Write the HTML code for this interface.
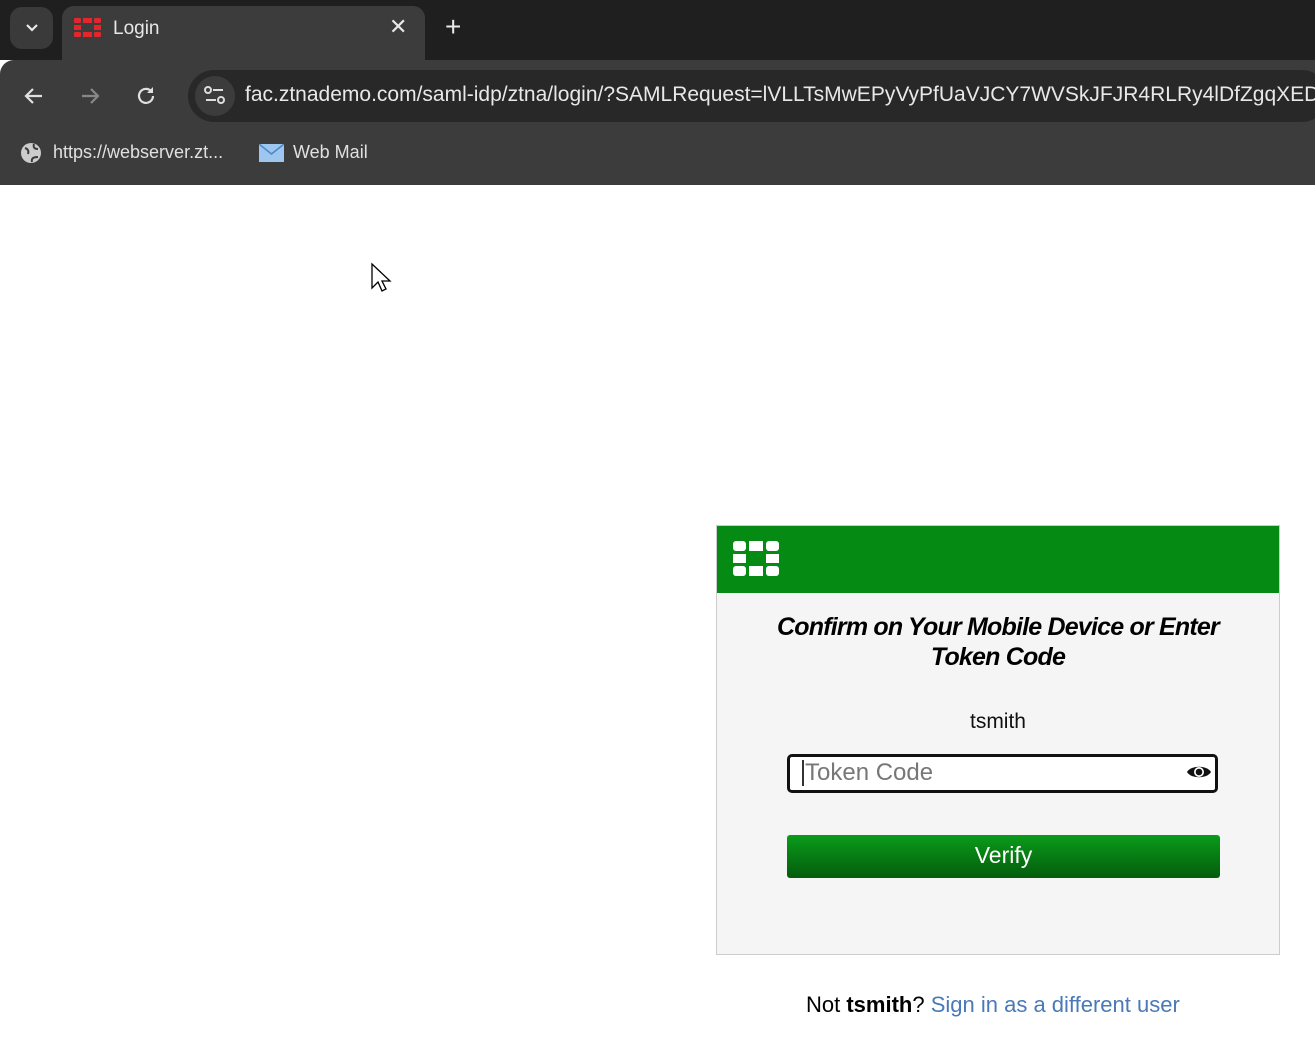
<!DOCTYPE html>
<html><head><style>
*{margin:0;padding:0;box-sizing:border-box}
body{width:1315px;height:1048px;background:#fff;font-family:"Liberation Sans",sans-serif;position:relative;overflow:hidden}
.abs{position:absolute}
</style></head><body>
<div class="abs" style="left:0;top:0;width:1315px;height:60px;background:#1f1f1f"></div>
<div class="abs" style="left:10px;top:7px;width:43px;height:42px;background:#3a3a3a;border-radius:12px;color:#ddd;text-align:center;line-height:42px;font-size:14px">
<svg width="14" height="10" viewBox="0 0 14 10" style="margin-top:16px"><path d="M2 2l5 5 5-5" stroke="#e8e8e8" stroke-width="2.2" fill="none"/></svg></div>
<div class="abs" style="left:62px;top:6px;width:363px;height:56px;background:#3c3c3c;border-radius:12px 12px 0 0"></div>
<svg class="abs" style="left:74px;top:18px" width="28" height="20" viewBox="0 0 28 20"><g fill="#e8242b"><rect x="0" y="0" width="7" height="5" rx="1.5"/><rect x="9" y="0" width="9" height="5"/><rect x="20" y="0" width="7" height="5" rx="1.5"/><rect x="0" y="7" width="7" height="5"/><rect x="20" y="7" width="7" height="5"/><rect x="0" y="14" width="7" height="5" rx="1.5"/><rect x="9" y="14" width="9" height="5"/><rect x="20" y="14" width="7" height="5" rx="1.5"/></g></svg>
<div class="abs" style="left:113px;top:18px;color:#e8e8e8;font-size:19px">Login</div>
<div class="abs" style="left:389px;top:14px;color:#e8e8e8;font-size:22px">✕</div>
<div class="abs" style="left:445px;top:11px;color:#e8e8e8;font-size:28px">+</div>
<div class="abs" style="left:0;top:60px;width:1315px;height:125px;background:#3c3c3c;border-radius:14px 0 0 0"></div>
<svg class="abs" style="left:22px;top:84px" width="24" height="24" viewBox="0 0 24 24"><path d="M20 12H5M11 5l-7 7 7 7" stroke="#e0e0e0" stroke-width="2.2" fill="none"/></svg>
<svg class="abs" style="left:78px;top:84px" width="24" height="24" viewBox="0 0 24 24"><path d="M4 12h15M13 5l7 7-7 7" stroke="#888" stroke-width="2.2" fill="none"/></svg>
<svg class="abs" style="left:134px;top:84px" width="24" height="24" viewBox="0 0 24 24"><path d="M19 12a7 7 0 1 1-2-5" stroke="#e0e0e0" stroke-width="2.2" fill="none"/><path d="M19 3v6h-6z" fill="#e0e0e0"/></svg>
<div class="abs" style="left:188px;top:70px;width:1140px;height:52px;background:#282828;border-radius:26px"></div>
<div class="abs" style="left:195px;top:76px;width:40px;height:40px;background:#3c3c3c;border-radius:20px"></div>
<svg class="abs" style="left:203px;top:85px" width="24" height="22" viewBox="0 0 24 22"><circle cx="5" cy="5" r="3" stroke="#ddd" stroke-width="2" fill="none"/><path d="M10 5h10M3 15h10" stroke="#ddd" stroke-width="2"/><circle cx="18" cy="15" r="3" stroke="#ddd" stroke-width="2" fill="none"/></svg>
<div class="abs" style="left:245px;top:83px;color:#e8e8e8;font-size:21px;white-space:nowrap">fac.ztnademo.com/saml-idp/ztna/login/?SAMLRequest=lVLLTsMwEPyVyPfUaVJCY7WVSkJFJR4RLRy4lDfZgqXED9</div>
<svg class="abs" style="left:20px;top:142px" width="22" height="22" viewBox="0 0 22 22"><circle cx="11" cy="11" r="10" fill="#ccc"/><path d="M5 6c3 1 4 3 3 6M12 20c-1-4 2-5 6-5M14 2c-1 3 0 5 4 5" stroke="#3c3c3c" stroke-width="2" fill="none"/></svg>
<div class="abs" style="left:53px;top:142px;color:#e0e0e0;font-size:18px">https://webserver.zt...</div>
<svg class="abs" style="left:259px;top:144px" width="25" height="18" viewBox="0 0 25 18"><rect width="25" height="18" fill="#9ec7ef"/><path d="M0 0l12.5 10L25 0" stroke="#4d86c7" stroke-width="1.5" fill="none"/></svg>
<div class="abs" style="left:293px;top:142px;color:#e0e0e0;font-size:18px">Web Mail</div>
<svg class="abs" style="left:370px;top:262px" width="22" height="32" viewBox="0 0 22 32"><path d="M2 2v24l6-6 4 9 4-2-4-8h8z" fill="#fff" stroke="#000" stroke-width="1.3"/></svg>
<div class="abs" style="left:716px;top:525px;width:564px;height:430px;background:#f5f5f5;border:1px solid #ccc"></div>
<div class="abs" style="left:717px;top:526px;width:562px;height:67px;background:#058a14"></div>
<svg class="abs" style="left:733px;top:541px" width="46" height="35" viewBox="0 0 46 35"><g fill="#fff"><rect x="0" y="0" width="13" height="10" rx="3"/><rect x="16" y="0" width="14" height="10"/><rect x="33" y="0" width="13" height="10" rx="3"/><rect x="0" y="13" width="13" height="9"/><rect x="33" y="13" width="13" height="9"/><rect x="0" y="25" width="13" height="10" rx="3"/><rect x="16" y="25" width="14" height="10"/><rect x="33" y="25" width="13" height="10" rx="3"/></g></svg>
<div class="abs" style="left:716px;top:612px;width:564px;text-align:center;font-size:25px;font-style:italic;font-weight:bold;line-height:30px;letter-spacing:-0.8px;color:#000">Confirm on Your Mobile Device or Enter<br>Token Code</div>
<div class="abs" style="left:716px;top:710px;width:564px;text-align:center;font-size:21px;color:#111">tsmith</div>
<div class="abs" style="left:787px;top:754px;width:431px;height:39px;background:#fff;border:3px solid #111;border-radius:5px"></div>
<div class="abs" style="left:802px;top:760px;width:1.5px;height:26px;background:#333"></div>
<div class="abs" style="left:805px;top:759px;font-size:24px;color:#777">Token Code</div>
<svg class="abs" style="left:1186px;top:763px" width="26" height="18" viewBox="0 0 26 18"><path d="M1 9C5 2 21 2 25 9 21 16 5 16 1 9z" fill="#111"/><circle cx="13" cy="9" r="5" fill="#fff"/><circle cx="13" cy="9" r="3.3" fill="#111"/></svg>
<div class="abs" style="left:787px;top:835px;width:433px;height:43px;border-radius:3px;background:linear-gradient(#0a9b1a,#045c0c);color:#fff;text-align:center;line-height:40px;font-size:23px">Verify</div>
<div class="abs" style="left:806px;top:992px;font-size:22px;color:#000;white-space:nowrap">Not <b>tsmith</b>? <span style="color:#4a79b8">Sign in as a different user</span></div>
</body></html>
